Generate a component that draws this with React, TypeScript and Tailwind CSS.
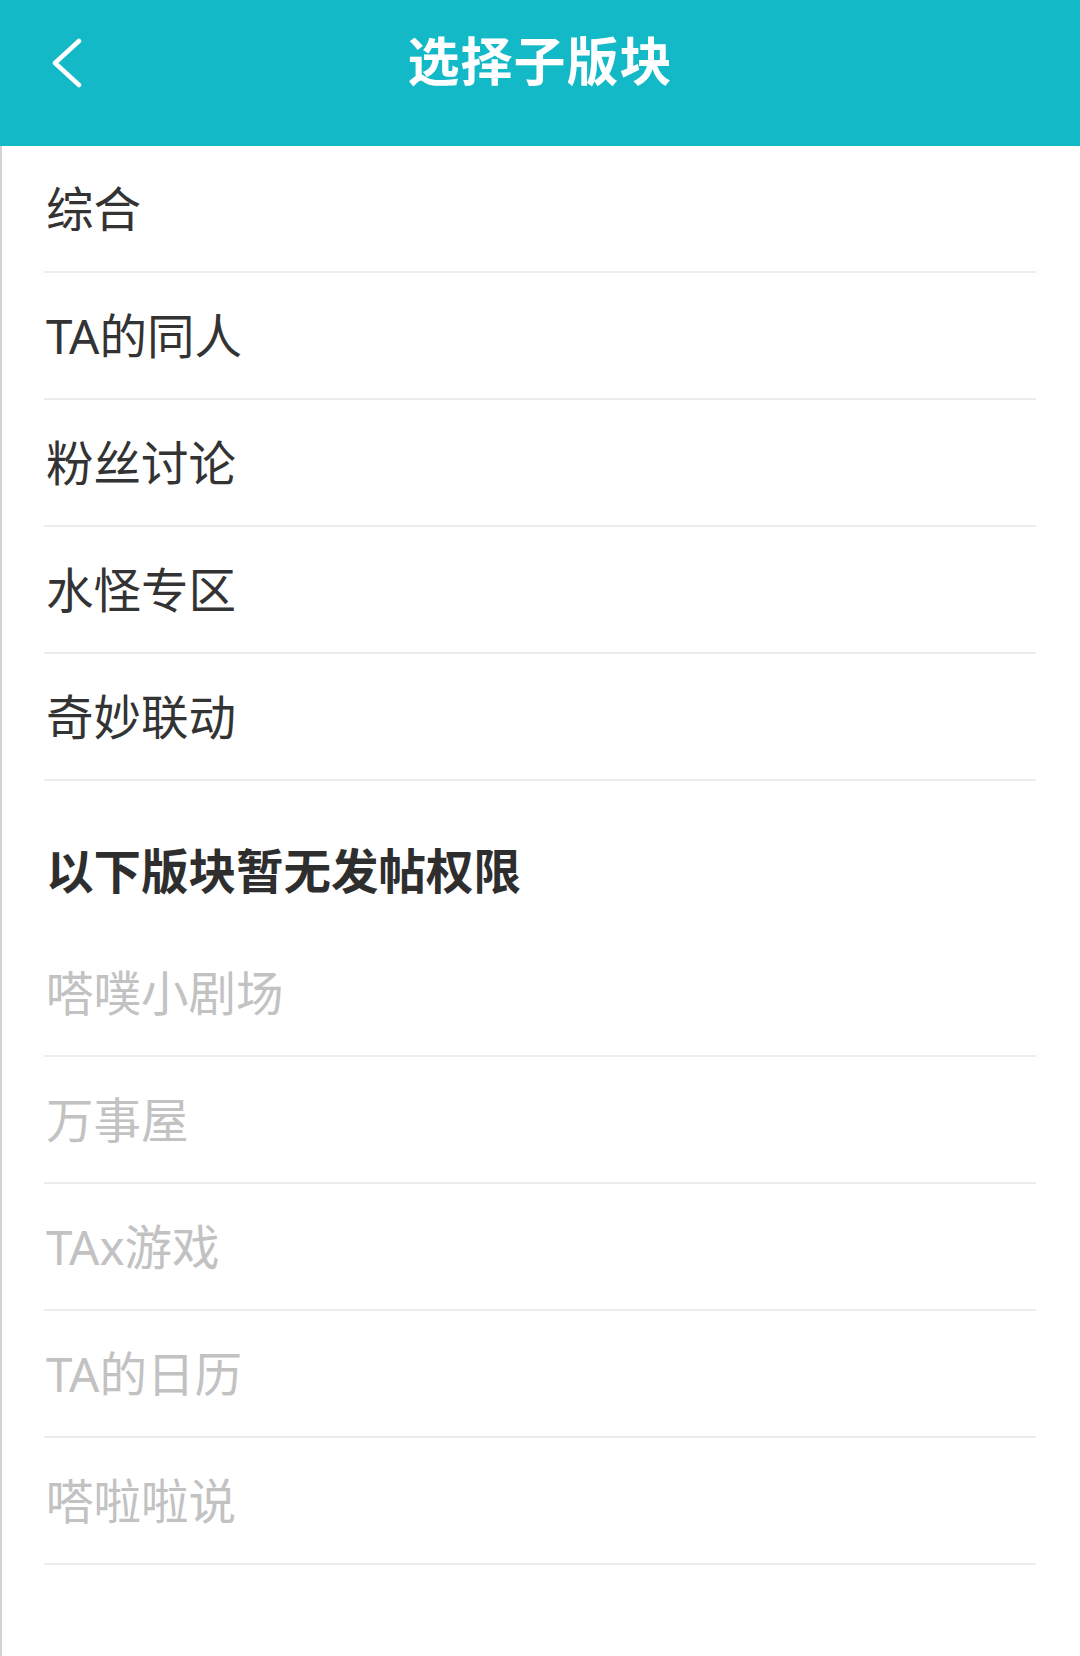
const allowed = ['综合', 'TA的同人', '粉丝讨论', '水怪专区', '奇妙联动']
const locked = ['嗒噗小剧场', '万事屋', 'TAx游戏', 'TA的日历', '嗒啦啦说']

function Row({ label, disabled }: { label: string; disabled?: boolean }) {
  return (
    <div className="ml-[42px] mr-[44px] h-[127px] flex items-center border-b-2 border-[#ececec]">
      <span className={`pl-[2px] text-[47.5px] leading-none ${disabled ? 'text-[#c2c2c2]' : 'text-[#333333]'}`}>
        {label}
      </span>
    </div>
  )
}

export default function App() {
  return (
    <div
      className="w-[1080px] h-[1656px] bg-white flex flex-col"
      style={{ fontFamily: '"Noto Sans", "Noto Sans CJK SC", sans-serif' }}
    >
      {/* Header */}
      <header className="h-[146px] bg-[#14b9c8] relative shrink-0 pt-[35px]">
        <button className="absolute left-[46px] top-[38px] w-[40px] h-[50px] flex items-center justify-center">
          <svg width="34" height="50" viewBox="0 0 34 50" fill="none">
            <path d="M30 3 L6 25 L30 47" stroke="white" strokeWidth="4.5" strokeLinecap="round" strokeLinejoin="round" />
          </svg>
        </button>
        <h1 className="w-full text-center text-white text-[52px] font-bold leading-none tracking-[1px]">选择子版块</h1>
      </header>

      <main className="flex-1 border-l-2 border-[#d4d4d4]">
        {allowed.map(name => (
          <Row key={name} label={name} />
        ))}

        <div className="ml-[42px] mr-[44px] h-[149px] pt-[66px]">
          <span className="pl-[2px] text-[47.5px] font-bold leading-none text-[#2e2e2e]">以下版块暂无发帖权限</span>
        </div>

        {locked.map(name => (
          <Row key={name} label={name} disabled />
        ))}
      </main>
    </div>
  )
}
